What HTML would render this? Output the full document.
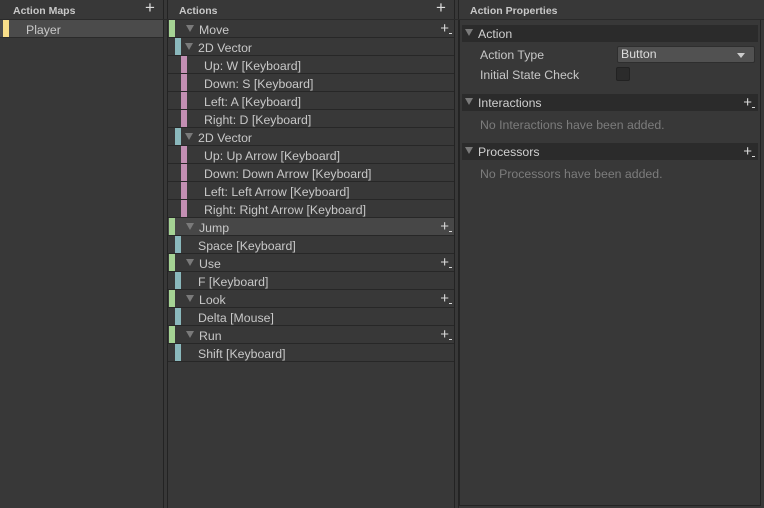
<!DOCTYPE html><html><head><style>
*{margin:0;padding:0;box-sizing:border-box}
body{width:764px;height:508px;background:#383838;font-family:"Liberation Sans",sans-serif;font-size:12.3px;color:#c8c8c8;position:relative;overflow:hidden}
.abs{position:absolute}
.hdr{font-size:10.5px;font-weight:bold;color:#c8c8c8}
.vl{position:absolute;top:0;bottom:0;width:1px;background:#232323}
.row{position:absolute;left:168px;width:286px;height:18px;border-bottom:1px solid #272727;line-height:20px}
.bar{position:absolute;top:0;width:6px;height:17px}
.g{background:#a5d394}.t{background:#8ab8bc}.p{background:#c38fb3}
.tri{display:inline-block;width:0;height:0;border-left:4px solid transparent;border-right:4px solid transparent;border-top:7px solid #7a7a7a;vertical-align:middle;margin-right:5px;position:relative;top:-2px}
.plus{position:absolute;right:5px;top:1px;font-size:15px;color:#d8d8d8;line-height:16px}
.plus:after{content:"";position:absolute;right:-3px;bottom:3px;width:3px;height:1px;background:#d8d8d8}
.sec{position:absolute;left:462px;width:296px;height:17px;background:#2b2b2b;line-height:18px;color:#d0d0d0}
.dim{color:#7c7c7c}
</style></head><body>
<div class="vl" style="left:163px"></div>
<div class="vl" style="left:167px"></div>
<div class="vl" style="left:454px"></div>
<div class="vl" style="left:458px"></div>
<div class="abs" style="left:459px;top:20px;width:302px;height:486px;border:1px solid #242424;border-top:none"></div>
<div class="abs" style="left:0;top:19px;width:764px;height:1px;background:#2a2a2a"></div>
<div class="abs hdr" style="left:13px;top:5px">Action Maps</div>
<div class="abs" style="left:145px;top:-2px;font-size:17px;color:#ddd">+</div>
<div class="abs hdr" style="left:179px;top:5px">Actions</div>
<div class="abs" style="left:436px;top:-2px;font-size:17px;color:#ddd">+</div>
<div class="abs hdr" style="left:470px;top:5px">Action Properties</div>
<div class="abs" style="left:0;top:20px;width:163px;height:18px;background:#4b4b4b;border-bottom:1px solid #2a2a2a"></div>
<div class="abs" style="left:3px;top:20px;width:6px;height:17px;background:#f9df8a"></div>
<div class="abs" style="left:26px;top:23px">Player</div>

<div class="row" style="top:20px"><div class="bar g" style="left:1px"></div><span style="position:absolute;left:18px"><i class="tri"></i>Move</span><span class="plus">+</span></div>
<div class="row" style="top:38px"><div class="bar t" style="left:7px"></div><span style="position:absolute;left:17px"><i class="tri"></i>2D Vector</span></div>
<div class="row" style="top:56px"><div class="bar p" style="left:13px"></div><span style="position:absolute;left:36px">Up: W [Keyboard]</span></div>
<div class="row" style="top:74px"><div class="bar p" style="left:13px"></div><span style="position:absolute;left:36px">Down: S [Keyboard]</span></div>
<div class="row" style="top:92px"><div class="bar p" style="left:13px"></div><span style="position:absolute;left:36px">Left: A [Keyboard]</span></div>
<div class="row" style="top:110px"><div class="bar p" style="left:13px"></div><span style="position:absolute;left:36px">Right: D [Keyboard]</span></div>
<div class="row" style="top:128px"><div class="bar t" style="left:7px"></div><span style="position:absolute;left:17px"><i class="tri"></i>2D Vector</span></div>
<div class="row" style="top:146px"><div class="bar p" style="left:13px"></div><span style="position:absolute;left:36px">Up: Up Arrow [Keyboard]</span></div>
<div class="row" style="top:164px"><div class="bar p" style="left:13px"></div><span style="position:absolute;left:36px">Down: Down Arrow [Keyboard]</span></div>
<div class="row" style="top:182px"><div class="bar p" style="left:13px"></div><span style="position:absolute;left:36px">Left: Left Arrow [Keyboard]</span></div>
<div class="row" style="top:200px"><div class="bar p" style="left:13px"></div><span style="position:absolute;left:36px">Right: Right Arrow [Keyboard]</span></div>
<div class="row" style="top:218px;background:#474747"><div class="bar g" style="left:1px"></div><span style="position:absolute;left:18px"><i class="tri"></i>Jump</span><span class="plus">+</span></div>
<div class="row" style="top:236px"><div class="bar t" style="left:7px"></div><span style="position:absolute;left:30px">Space [Keyboard]</span></div>
<div class="row" style="top:254px"><div class="bar g" style="left:1px"></div><span style="position:absolute;left:18px"><i class="tri"></i>Use</span><span class="plus">+</span></div>
<div class="row" style="top:272px"><div class="bar t" style="left:7px"></div><span style="position:absolute;left:30px">F [Keyboard]</span></div>
<div class="row" style="top:290px"><div class="bar g" style="left:1px"></div><span style="position:absolute;left:18px"><i class="tri"></i>Look</span><span class="plus">+</span></div>
<div class="row" style="top:308px"><div class="bar t" style="left:7px"></div><span style="position:absolute;left:30px">Delta [Mouse]</span></div>
<div class="row" style="top:326px"><div class="bar g" style="left:1px"></div><span style="position:absolute;left:18px"><i class="tri"></i>Run</span><span class="plus">+</span></div>
<div class="row" style="top:344px"><div class="bar t" style="left:7px"></div><span style="position:absolute;left:30px">Shift [Keyboard]</span></div>

<div class="sec" style="top:25px"><span style="position:absolute;left:3px"><i class="tri"></i>Action</span></div>
<div class="abs" style="left:480px;top:48px">Action Type</div>
<div class="abs" style="left:617px;top:46px;width:138px;height:17px;background:#515151;border-radius:2px;border:1px solid #2e2e2e;padding-left:3px;line-height:15px;color:#ddd">Button<i class="tri" style="position:absolute;right:4px;top:6px;border-top-color:#ccc;border-top-width:5px;border-left-width:4px;border-right-width:4px"></i></div>
<div class="abs" style="left:480px;top:68px">Initial State Check</div>
<div class="abs" style="left:616px;top:67px;width:14px;height:14px;background:#2b2b2b;border:1px solid #222;border-radius:2px"></div>
<div class="sec" style="top:94px"><span style="position:absolute;left:3px"><i class="tri"></i>Interactions</span><span class="plus" style="right:6px">+</span></div>
<div class="abs dim" style="left:480px;top:118px">No Interactions have been added.</div>
<div class="sec" style="top:143px"><span style="position:absolute;left:3px"><i class="tri"></i>Processors</span><span class="plus" style="right:6px">+</span></div>
<div class="abs dim" style="left:480px;top:167px">No Processors have been added.</div>
</body></html>
